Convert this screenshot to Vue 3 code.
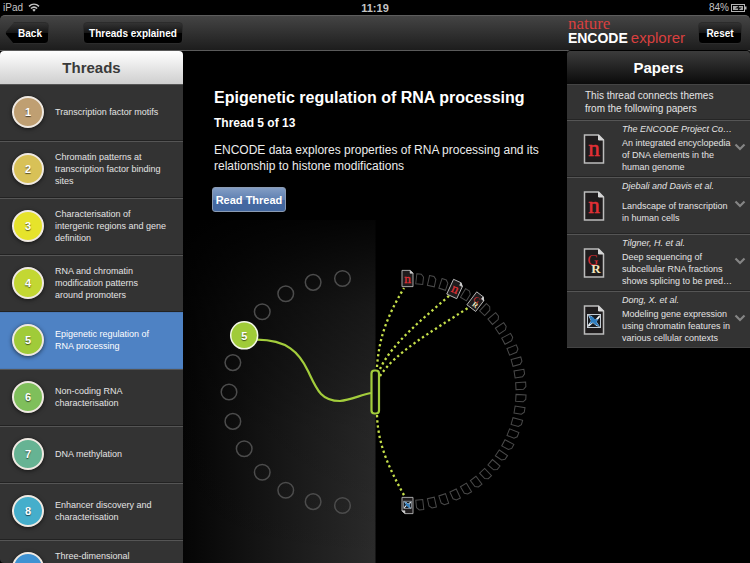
<script setup>
import { ref } from 'vue'

const threads = [
  { color: '#bf9f72', label: 'Transcription factor motifs' },
  { color: '#d8c157', label: 'Chromatin patterns at transcription factor binding sites' },
  { color: '#e6e32b', label: 'Characterisation of intergenic regions and gene definition' },
  { color: '#c3d733', label: 'RNA and chromatin modification patterns around promoters' },
  { color: '#a0cb39', label: 'Epigenetic regulation of RNA processing' },
  { color: '#7fbf5b', label: 'Non-coding RNA characterisation' },
  { color: '#66b393', label: 'DNA methylation' },
  { color: '#45aecb', label: 'Enhancer discovery and characterisation' },
  { color: '#3f92d2', label: 'Three-dimensional connections across the genome' }
]

const papers = [
  { icon: 'n', author: 'The ENCODE Project Co…', title: 'An integrated encyclopedia of DNA elements in the human genome' },
  { icon: 'n', author: 'Djebali and Davis et al.', title: 'Landscape of transcription in human cells' },
  { icon: 'gr', author: 'Tilgner, H. et al.', title: 'Deep sequencing of subcellular RNA fractions shows splicing to be pred…' },
  { icon: 'x', author: 'Dong, X. et al.', title: 'Modeling gene expression using chromatin features in various cellular contexts' }
]

const selected = ref(4)

const RADIUS = 113.5
const CY = 392

const threadNodes = Array.from({ length: 13 }, (_, i) => {
  const a = (i * Math.PI) / 12
  return { i, x: 342.5 - RADIUS * Math.sin(a), y: CY - RADIUS * Math.cos(a) }
}).filter((n) => n.i !== 4)

const paperNodes = Array.from({ length: 30 }, (_, i) => {
  const deg = (i * 180) / 29
  const a = (deg * Math.PI) / 180
  return { i, deg, x: 407.5 + RADIUS * Math.sin(a), y: CY - RADIUS * Math.cos(a) }
})

const linked = { 0: 'n', 4: 'n', 6: 'gr', 29: 'x' }
const emptyPapers = paperNodes.filter((p) => !(p.i in linked))
const linkedPapers = paperNodes.filter((p) => p.i in linked).map((p) => ({ ...p, icon: linked[p.i] }))
</script>

<template>
  <div class="app">
    <div class="status">
      <span class="status-left">
        iPad
        <svg width="12" height="9" viewBox="0 0 12 9" fill="none" stroke="#c4c4c4" stroke-width="1.5">
          <path d="M1 3.4C4 .6 8 .6 11 3.4" />
          <path d="M2.9 5.5C4.7 3.9 7.3 3.9 9.1 5.5" />
          <path d="M4.3 6.7Q6 5.4 7.7 6.7L6 8.7Z" fill="#c4c4c4" stroke="none" />
        </svg>
      </span>
      <span class="clock">11:19</span>
      <span class="status-right">
        84%
        <svg width="16" height="8" viewBox="0 0 16 8">
          <rect x=".5" y=".5" width="13" height="7" fill="none" stroke="#b4b4b4" />
          <rect x="2" y="2" width="10" height="4" fill="#a8a8a8" />
          <rect x="14" y="2.500" width="1.500" height="3" fill="#b4b4b4" />
          <path d="M4 4.600 8 1.800V3.500H11L7 6.400V4.600Z" fill="#111" />
        </svg>
      </span>
    </div>

    <header class="toolbar">
      <div class="tools">
        <button class="back" type="button">Back</button>
        <button class="dark-btn" type="button">Threads explained</button>
      </div>
      <div class="tools-right">
        <div class="logo">
          <span class="logo-nature">nature</span>
          <span class="logo-main"><b>ENCODE</b><span>explorer</span></span>
        </div>
        <button class="dark-btn reset" type="button">Reset</button>
      </div>
    </header>

    <div class="body">
      <nav class="threads">
        <h2 class="threads-head">Threads</h2>
        <ul>
          <li v-for="(t, i) in threads" :key="i">
            <button type="button" class="thread" :class="{ active: i === selected }" @click="selected = i">
              <span class="badge" :style="{ background: t.color }">{{ i + 1 }}</span>
              <span class="thread-label">{{ t.label }}</span>
            </button>
          </li>
        </ul>
      </nav>

      <main class="stage">
        <section class="intro">
          <h1>Epigenetic regulation of RNA processing</h1>
          <h3>Thread 5 of 13</h3>
          <p>ENCODE data explores properties of RNA processing and its relationship to histone modifications</p>
          <button class="read" type="button">Read Thread</button>
        </section>

        <svg class="diagram" viewBox="183 220 384 343">
          <defs>
            <linearGradient id="side" x1="0" x2="1" y1="0" y2="0">
              <stop offset="0" stop-color="#050505" />
              <stop offset=".5" stop-color="#181818" />
              <stop offset="1" stop-color="#2b2b2b" />
            </linearGradient>
            <linearGradient id="fade" x1="0" x2="0" y1="0" y2="1">
              <stop offset="0" stop-color="#000" stop-opacity=".9" />
              <stop offset=".25" stop-color="#000" stop-opacity=".45" />
              <stop offset=".6" stop-color="#000" stop-opacity=".12" />
              <stop offset="1" stop-color="#000" stop-opacity="0" />
            </linearGradient>
            <g id="doc">
              <path d="M-9.500 -14H4.500L9.500 -9V14H-9.500Z" fill="#1f1c1d" stroke="#bcbcbc" stroke-width="1.500" />
              <path d="M4.500 -14V-9H9.500Z" fill="#d6d6d6" stroke="#d6d6d6" />
            </g>
            <g id="mark-x">
              <rect x="-6.500" y="-5.500" width="13" height="13" fill="#151a20" stroke="#c3ccd4" />
              <path d="M-6 -5 -2.500 -4 1 0 5.500 -5 6 -3 2.500 1.500 6 7 2.500 6 -1 3 -5.500 7 -6 5 -3 1Z" fill="#f4f7f9" />
              <path d="M-5 -4.500 -1 -3 1 -.5 4 -1 2.500 2 6 7 1 4.500 -1 2.500 -4.500 4.500 -3 1Z" fill="#2f7ec0" />
            </g>
          </defs>

          <rect x="183" y="220" width="192.500" height="343" fill="url(#side)" />
          <rect x="183" y="220" width="193" height="343" fill="url(#fade)" />

          <g fill="none" stroke="#4c4c4c" stroke-width="1.500">
            <circle v-for="n in threadNodes" :key="n.i" :cx="n.x" :cy="n.y" r="7.800" />
          </g>
          <g fill="none" stroke="#4a4a4a">
            <path
              v-for="p in emptyPapers"
              :key="p.i"
              d="M-3.500 -5H1L3.500 -2.500V5H-3.500Z"
              :transform="`translate(${p.x} ${p.y}) rotate(${p.deg})`"
            />
          </g>

          <g fill="none" stroke="#c6e04a" stroke-width="2.300" stroke-dasharray="2.300 2.900">
            <path d="M377 367C379 339 386 318 404 288" />
            <path d="M380 369C392 343 424 318 450 295" />
            <path d="M380 376C396 352 428 334 471 306" />
            <path d="M377 415C378 446 390 470 405 497" />
          </g>
          <g fill="none" stroke="#a3cd3c" stroke-width="2.200">
            <path d="M257 339.700C287 340 299 352 308 371S321 401 340 401C350 400 361 395 371 393" />
            <rect x="371.500" y="370.500" width="7.500" height="43" rx="3" fill="#0c0c0c" />
          </g>

          <g
            v-for="p in linkedPapers"
            :key="p.i"
            :transform="`translate(${p.x} ${p.y}) rotate(${p.deg}) scale(.58)`"
          >
            <use href="#doc" />
            <text v-if="p.icon === 'n'" class="mark-n" y="7">n</text>
            <template v-else-if="p.icon === 'gr'">
              <text class="mark-g" x="-1" y="2">G</text>
              <text class="mark-r" x="2" y="10">R</text>
            </template>
            <use v-else href="#mark-x" />
          </g>

          <circle cx="244.200" cy="335.300" r="13.500" fill="#a0cb39" stroke="#f3f7e6" stroke-width="1.500" />
          <text class="node-num" x="244.200" y="339.500">5</text>
        </svg>
      </main>

      <aside class="papers">
        <h2 class="papers-head">Papers</h2>
        <p class="papers-note">This thread connects themes from the following papers</p>
        <ul>
          <li v-for="(p, i) in papers" :key="i" class="paper">
            <svg class="paper-icon" width="22" height="30" viewBox="-11 -15 22 30">
              <use href="#doc" />
              <text v-if="p.icon === 'n'" class="mark-n" y="7">n</text>
              <template v-else-if="p.icon === 'gr'">
                <text class="mark-g" x="-1" y="2">G</text>
                <text class="mark-r" x="2" y="10">R</text>
              </template>
              <use v-else href="#mark-x" />
            </svg>
            <div class="paper-text">
              <em>{{ p.author }}</em>
              <div class="paper-title"><span>{{ p.title }}</span></div>
            </div>
            <button class="expand" type="button" :aria-label="p.author">
              <svg width="12" height="8" viewBox="0 0 12 8" fill="none" stroke="#858585" stroke-width="2.200">
                <path d="M1.500 1.500 6 6 10.500 1.500" />
              </svg>
            </button>
          </li>
        </ul>
      </aside>
    </div>
  </div>
</template>

<style>
body {
  background: #000;
}
</style>

<style scoped>
.app {
  display: flex;
  flex-direction: column;
  height: 100vh;
  overflow: hidden;
  background: #000;
  color: #fff;
  font-family: "Liberation Sans", Arial, sans-serif;
}
* {
  box-sizing: border-box;
}
h1, h2, h3, p, ul {
  margin: 0;
  padding: 0;
}
ul {
  list-style: none;
}
button {
  margin: 0;
  padding: 0;
  border: 0;
  color: inherit;
  font-family: inherit;
  cursor: pointer;
}
.status {
  display: grid;
  grid-template-columns: 1fr auto 1fr;
  align-items: center;
  flex: none;
  height: 15px;
  padding: 0 3px;
  color: #c4c4c4;
  font-size: 10px;
}
.status-left,
.status-right {
  display: flex;
  align-items: center;
  gap: 5px;
}
.status-right {
  justify-content: flex-end;
  gap: 2px;
}
.clock {
  font-size: 11px;
  font-weight: 700;
}
.toolbar {
  display: flex;
  justify-content: space-between;
  align-items: center;
  flex: none;
  height: 36px;
  padding: 0 8px 0 5px;
  border-top: 1px solid #5d5d5d;
  border-bottom: 1px solid #5a5a5a;
  border-radius: 5px 5px 0 0;
  background: linear-gradient(#444, #1d1d1d);
}
.tools {
  display: flex;
  gap: 34px;
}
.tools-right {
  display: flex;
  align-items: center;
  gap: 13px;
}
.back,
.dark-btn {
  height: 22px;
  border: 1px solid #2c2c2c;
  border-radius: 4px;
  background: linear-gradient(#333 0, #161616 48%, #000 52%, #000 100%);
  font-size: 10px;
  font-weight: 700;
}
.dark-btn {
  width: 100px;
}
.back {
  width: 44px;
  padding-left: 6px;
  clip-path: polygon(0 50%, 9px 0, 100% 0, 100% 100%, 9px 100%);
}
.reset {
  width: 44px;
}
.logo {
  display: flex;
  flex-direction: column;
  padding-bottom: 4px;
  color: #d9403f;
}
.logo-nature {
  font-family: "Liberation Serif", serif;
  font-size: 17px;
  line-height: 13px;
}
.logo-main {
  display: flex;
  align-items: baseline;
  gap: 3px;
  font-size: 15px;
  line-height: 15px;
}
.logo-main b {
  color: #fff;
  font-size: 14px;
}
.body {
  display: flex;
  align-items: flex-start;
  flex: 1;
  min-height: 0;
}
.threads {
  flex: 0 0 183px;
  align-self: stretch;
  overflow: hidden;
  border-bottom-left-radius: 4px;
}
.threads-head,
.papers-head {
  height: 33px;
  border-radius: 4px 4px 0 0;
  font-size: 15px;
  line-height: 33px;
  text-align: center;
}
.threads-head {
  background: linear-gradient(#fff, #cfcfcf);
  color: #3a3a3a;
}
.thread {
  display: flex;
  align-items: center;
  gap: 11px;
  width: 100%;
  height: 57px;
  padding: 0 16px 1px 12px;
  border-top: 1px solid #555;
  border-bottom: 1px solid #222;
  background: #333;
  color: #e4e4e4;
  font-size: 9px;
  line-height: 12px;
  text-align: left;
}
.thread.active {
  border-color: #4a7ab8;
  background: #4e82c4;
  color: #fff;
}
.badge {
  flex: none;
  width: 32px;
  height: 32px;
  border: 2px solid #efe9e2;
  border-radius: 50%;
  box-shadow: 0 1px 4px #0009;
  color: #fff;
  font-size: 11px;
  font-weight: 700;
  line-height: 28px;
  text-align: center;
  text-shadow: 0 1px 1px #0009;
}
.stage {
  display: flex;
  flex: 1;
  flex-direction: column;
  min-width: 0;
}
.intro {
  display: flex;
  flex-direction: column;
  align-items: flex-start;
  height: 169px;
  padding: 37px 16px 0 31px;
}
h1 {
  font-size: 16px;
  line-height: 20px;
  white-space: nowrap;
}
h3 {
  margin-top: 7px;
  font-size: 12px;
  line-height: 16px;
}
.intro p {
  margin-top: 11px;
  color: #ececec;
  font-size: 12px;
  line-height: 16px;
}
.read {
  width: 74px;
  height: 25px;
  margin: 13px 0 0 -2px;
  border: 1px solid #8b9bb3;
  border-radius: 3px;
  background: linear-gradient(#829dc4, #5f80b2 50%, #4468a2 52%, #44689f);
  font-size: 11px;
  font-weight: 700;
}
.diagram {
  display: block;
  width: 100%;
}
.mark-n,
.mark-g,
.mark-r {
  font-family: "Liberation Serif", serif;
  text-anchor: middle;
}
.mark-n {
  fill: #e03036;
  stroke: #e03036;
  stroke-width: 0.5px;
  font-size: 23px;
}
.mark-g {
  fill: #d62c33;
  font-size: 15px;
}
.mark-r {
  fill: #f3e6bd;
  font-size: 13px;
  font-weight: 700;
}
.node-num {
  fill: #fff;
  font-size: 11px;
  font-weight: 700;
  text-anchor: middle;
  text-shadow: 0 1px 1px #0009;
}
.papers {
  flex: 0 0 183px;
  background: #333;
}
.papers-head {
  background: linear-gradient(#3c3c3c, #0a0a0a);
  box-shadow: 0 0 0 1px #000;
}
.papers-note {
  height: 36px;
  padding: 4px 24px 0 18px;
  border-top: 1px solid #444;
  color: #e4e4e4;
  font-size: 10px;
  line-height: 13px;
}
.paper {
  display: flex;
  height: 57px;
  padding: 2px 4px 0 16px;
  border-top: 1px solid #555;
  box-shadow: 0 -1px #252525;
}
.paper:last-child {
  border-bottom: 1px solid #444;
}
.paper-icon {
  flex: none;
  margin-top: 11px;
}
.paper-text {
  flex: 1;
  min-width: 0;
  padding-left: 17px;
  color: #e4e4e4;
  font-size: 9px;
  line-height: 12px;
}
.paper-text em {
  display: block;
  white-space: nowrap;
}
.paper-title {
  display: flex;
  align-items: center;
  height: 36px;
  margin-top: 2px;
}
.expand {
  align-self: flex-start;
  flex: none;
  width: 12px;
  height: 8px;
  margin-top: 20px;
  background: none;
  line-height: 0;
}
</style>
